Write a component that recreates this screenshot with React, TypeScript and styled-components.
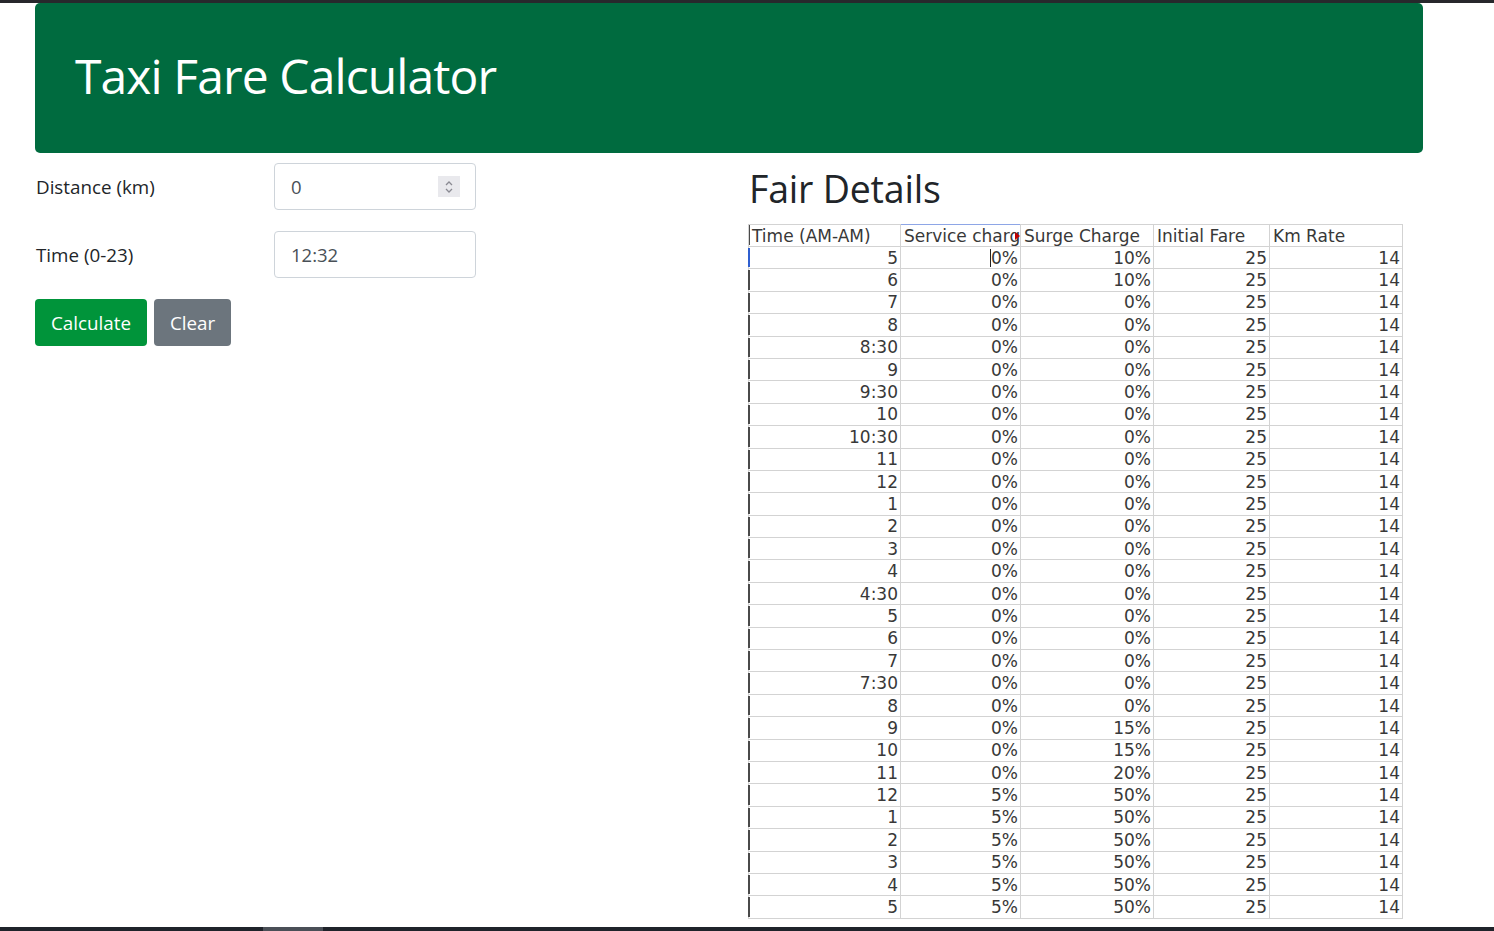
import React from "react";
import styled, { createGlobalStyle } from "styled-components";

const GlobalStyle = createGlobalStyle`
  html, body { margin: 0; padding: 0; background: #fff; }
  body { font-family: "Open Sans", "Noto Sans", sans-serif; color: #212529; }
  * { box-sizing: border-box; }
`;

const TopStrip = styled.div`
  height: 3px;
  background: #27282c;
`;

const Page = styled.div`
  padding: 0 71px 0 35px;
`;

const Jumbotron = styled.header`
  height: 150px;
  background: #006b3f;
  border-radius: 5px;
  display: flex;
  align-items: center;
  padding: 0 0 5px 40px;
`;

const Title = styled.h1`
  margin: 0;
  color: #fff;
  font-weight: 400;
  font-size: 48px;
  letter-spacing: -0.9px;
`;

const Main = styled.div`
  display: grid;
  grid-template-columns: 713px 1fr;
  padding-top: 10px;
`;

const Form = styled.div`
  display: flex;
  flex-direction: column;
  gap: 21px;
`;

const FormRow = styled.div`
  display: grid;
  grid-template-columns: 239px 202px;
  align-items: center;
`;

const Label = styled.label`
  font-size: 18.8px;
  padding-left: 1px;
  color: #212529;
`;

const InputWrap = styled.div`
  position: relative;
  height: 47px;
`;

const Input = styled.input`
  width: 100%;
  height: 100%;
  border: 1px solid #ced4da;
  border-radius: 4px;
  padding: 0 16px;
  font-family: inherit;
  font-size: 18.5px;
  color: #495057;
  background: #fff;
  outline: none;
`;

const Spinner = styled.div`
  position: absolute;
  right: 16px;
  top: 13px;
  width: 22px;
  height: 21px;
  background: #e9e9ed;
  display: flex;
  align-items: center;
  justify-content: center;
`;

const Buttons = styled.div`
  display: flex;
  gap: 7px;
`;

const Button = styled.button<{ $variant: "success" | "secondary" }>`
  height: 47px;
  padding: 0 16px;
  border: none;
  border-radius: 4px;
  font-family: inherit;
  font-size: 18.8px;
  color: #fff;
  background: ${(p) => (p.$variant === "success" ? "#00943a" : "#6c757d")};
`;

const Right = styled.section`
  display: flex;
  flex-direction: column;
`;

const SectionTitle = styled.h2`
  margin: 2px 0 0 1px;
  font-weight: 400;
  font-size: 37.5px;
  line-height: 48px;
  letter-spacing: -0.2px;
  color: #212529;
`;

const Sheet = styled.table`
  margin-top: 11px;
  border-collapse: collapse;
  table-layout: fixed;
  width: 654px;
  font-family: "DejaVu Sans", sans-serif;
  font-size: 17px;
  color: #383838;
`;

const HeadCell = styled.th<{ $selected?: boolean }>`
  position: relative;
  height: 22px;
  padding: 0 3px;
  text-align: left;
  font-weight: 400;
  white-space: nowrap;
  overflow: hidden;
  border: 1px solid #d3d3d3;
  border-top-color: ${(p) => (p.$selected ? "#8ea6e6" : "#d3d3d3")};
  line-height: 20px;
  &:first-child::before {
    content: "";
    position: absolute;
    left: -1px;
    top: 0;
    bottom: 1px;
    width: 2px;
    background: #4a4a4a;
  }
`;

const Cell = styled.td<{ $marker?: boolean }>`
  position: relative;
  height: 22.4px;
  padding: 0 2px 0 3px;
  text-align: right;
  white-space: nowrap;
  border: 1px solid #d3d3d3;
  line-height: 20px;
  &:first-child::before {
    content: "";
    position: absolute;
    left: -1px;
    top: 1px;
    bottom: 1px;
    width: 2px;
    background: ${(p) => (p.$marker ? "#2f5fd0" : "#4a4a4a")};
  }
`;

const Caret = styled.span`
  display: inline-block;
  width: 1px;
  height: 18px;
  background: #222;
  vertical-align: -3px;
`;

const Overflow = styled.span`
  position: absolute;
  right: 0;
  top: 7px;
  width: 0;
  height: 0;
  border-top: 4px solid transparent;
  border-bottom: 4px solid transparent;
  border-left: 5px solid #c00000;
`;

const BottomBar = styled.div`
  position: fixed;
  left: 0;
  right: 0;
  bottom: 0;
  height: 4px;
  background: #1f232a;
`;

const ScrollThumb = styled.div`
  position: absolute;
  left: 263px;
  top: 0;
  width: 60px;
  height: 100%;
  background: #4a4f57;
`;

const rows: [string, string, string][] = [
  ["5", "0%", "10%"],
  ["6", "0%", "10%"],
  ["7", "0%", "0%"],
  ["8", "0%", "0%"],
  ["8:30", "0%", "0%"],
  ["9", "0%", "0%"],
  ["9:30", "0%", "0%"],
  ["10", "0%", "0%"],
  ["10:30", "0%", "0%"],
  ["11", "0%", "0%"],
  ["12", "0%", "0%"],
  ["1", "0%", "0%"],
  ["2", "0%", "0%"],
  ["3", "0%", "0%"],
  ["4", "0%", "0%"],
  ["4:30", "0%", "0%"],
  ["5", "0%", "0%"],
  ["6", "0%", "0%"],
  ["7", "0%", "0%"],
  ["7:30", "0%", "0%"],
  ["8", "0%", "0%"],
  ["9", "0%", "15%"],
  ["10", "0%", "15%"],
  ["11", "0%", "20%"],
  ["12", "5%", "50%"],
  ["1", "5%", "50%"],
  ["2", "5%", "50%"],
  ["3", "5%", "50%"],
  ["4", "5%", "50%"],
  ["5", "5%", "50%"],
];

export default function App() {
  return (
    <>
      <GlobalStyle />
      <TopStrip />
      <Page>
        <Jumbotron>
          <Title>Taxi Fare Calculator</Title>
        </Jumbotron>
        <Main>
          <Form>
            <FormRow>
              <Label>Distance (km)</Label>
              <InputWrap>
                <Input defaultValue="0" />
                <Spinner>
                  <svg width="10" height="16" viewBox="0 0 10 16" fill="none" stroke="#8a8a92" strokeWidth="1.3">
                    <path d="M2 6 L5 3 L8 6" />
                    <path d="M2 10 L5 13 L8 10" />
                  </svg>
                </Spinner>
              </InputWrap>
            </FormRow>
            <FormRow>
              <Label>Time (0-23)</Label>
              <InputWrap>
                <Input defaultValue="12:32" />
              </InputWrap>
            </FormRow>
            <Buttons>
              <Button $variant="success">Calculate</Button>
              <Button $variant="secondary">Clear</Button>
            </Buttons>
          </Form>
          <Right>
            <SectionTitle>Fair Details</SectionTitle>
            <Sheet>
              <colgroup>
                <col style={{ width: 152 }} />
                <col style={{ width: 120 }} />
                <col style={{ width: 133 }} />
                <col style={{ width: 116 }} />
                <col style={{ width: 133 }} />
              </colgroup>
              <thead>
                <tr>
                  <HeadCell>Time (AM-AM)</HeadCell>
                  <HeadCell $selected>
                    Service charge
                    <Overflow />
                  </HeadCell>
                  <HeadCell>Surge Charge</HeadCell>
                  <HeadCell>Initial Fare</HeadCell>
                  <HeadCell>Km Rate</HeadCell>
                </tr>
              </thead>
              <tbody>
                {rows.map((r, i) => (
                  <tr key={i}>
                    <Cell $marker={i === 0}>{r[0]}</Cell>
                    <Cell>
                      {i === 0 && <Caret />}
                      {r[1]}
                    </Cell>
                    <Cell>{r[2]}</Cell>
                    <Cell>25</Cell>
                    <Cell>14</Cell>
                  </tr>
                ))}
              </tbody>
            </Sheet>
          </Right>
        </Main>
      </Page>
      <BottomBar>
        <ScrollThumb />
      </BottomBar>
    </>
  );
}
